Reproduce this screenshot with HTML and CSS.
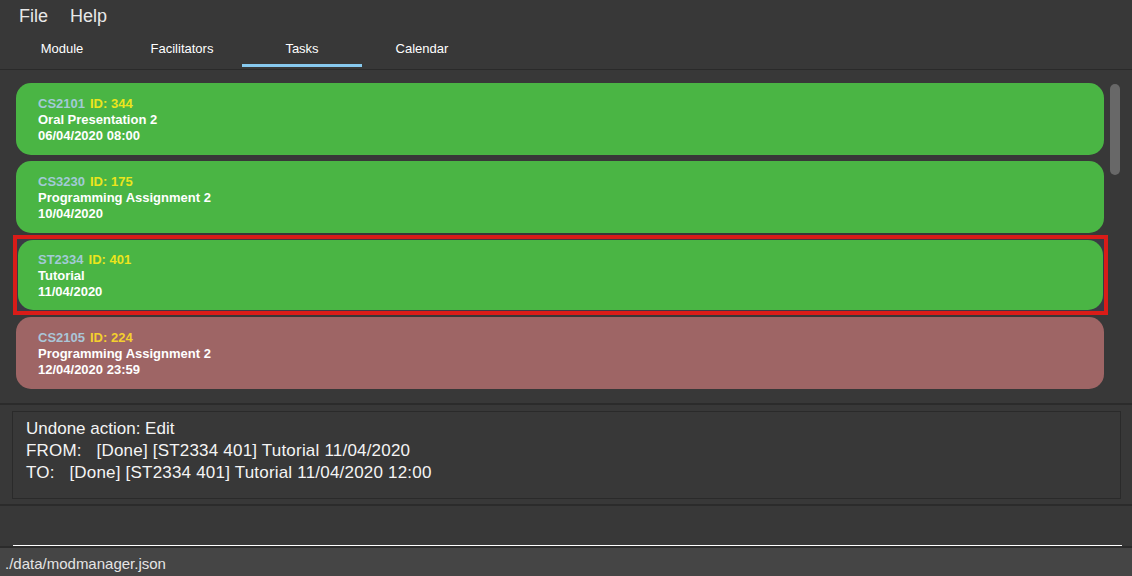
FILE: index.html
```html
<!DOCTYPE html>
<html>
<head>
<meta charset="utf-8">
<link rel="stylesheet" href="styles.css">
</head>
<body>
<div class="app">
  <div class="menubar">
    <span class="menu-item">File</span>
    <span class="menu-item">Help</span>
  </div>
  <div class="tabs">
    <div class="tab">Module</div>
    <div class="tab">Facilitators</div>
    <div class="tab active">Tasks</div>
    <div class="tab">Calendar</div>
  </div>
  <div class="list">
    <div class="cards">
      <div class="cell">
        <div class="card done">
          <div class="line"><span class="code">CS2101</span><span class="id">ID: 344</span></div>
          <div class="line">Oral Presentation 2</div>
          <div class="line">06/04/2020 08:00</div>
        </div>
      </div>
      <div class="cell">
        <div class="card done">
          <div class="line"><span class="code">CS3230</span><span class="id">ID: 175</span></div>
          <div class="line">Programming Assignment 2</div>
          <div class="line">10/04/2020</div>
        </div>
      </div>
      <div class="cell selected">
        <div class="card done">
          <div class="line"><span class="code">ST2334</span><span class="id">ID: 401</span></div>
          <div class="line">Tutorial</div>
          <div class="line">11/04/2020</div>
        </div>
      </div>
      <div class="cell">
        <div class="card overdue">
          <div class="line"><span class="code">CS2105</span><span class="id">ID: 224</span></div>
          <div class="line">Programming Assignment 2</div>
          <div class="line">12/04/2020 23:59</div>
        </div>
      </div>
    </div>
    <div class="scrolltrack"><div class="thumb"></div></div>
  </div>
  <div class="sep"></div>
  <div class="result">
    <div class="result-box">
      <div class="rline">Undone action: Edit</div>
      <div class="rline wide">FROM:   [Done] [ST2334 401] Tutorial 11/04/2020</div>
      <div class="rline wide">TO:   [Done] [ST2334 401] Tutorial 11/04/2020 12:00</div>
    </div>
  </div>
  <div class="sep"></div>
  <div class="command">
    <div class="command-input"></div>
  </div>
  <div class="sep"></div>
  <div class="status">./data/modmanager.json</div>
</div>
</body>
</html>
```
FILE: styles.css
```css
html, body {
  margin: 0;
  padding: 0;
}
body {
  background: #383838;
  font-family: "Liberation Sans", Arial, sans-serif;
  color: #ffffff;
}
.app {
  width: 1132px;
  height: 576px;
  display: flex;
  flex-direction: column;
  overflow: hidden;
}
.menubar {
  height: 30px;
  display: flex;
  align-items: center;
  padding-left: 8px;
  box-sizing: border-box;
  padding-top: 2px;
}
.menu-item {
  font-size: 18px;
  color: #e8e8e8;
  padding: 0 11px;
}
.tabs {
  height: 40px;
  box-sizing: border-box;
  border-bottom: 1px solid #2a2a2a;
  display: flex;
  padding-left: 2px;
}
.tab {
  width: 120px;
  height: 37px;
  box-sizing: border-box;
  display: flex;
  align-items: center;
  justify-content: center;
  font-size: 13px;
  color: #ffffff;
  padding-bottom: 1px;
}
.tab.active {
  border-bottom: 3px solid #87c9ee;
  padding-top: 3px;
}
.list {
  height: 333px;
  display: flex;
  padding: 13px 12px 0 16px;
  box-sizing: border-box;
  overflow: hidden;
}
.cards {
  width: 1088px;
  display: flex;
  flex-direction: column;
  gap: 6px;
}
.cell {
  height: 72px;
  flex: none;
}
.cell.selected {
  margin: -4px -4px -4px -3px;
  height: 80px;
  border: 4px solid #d91c18;
  padding: 1px;
  box-sizing: border-box;
  background: #3a3a44;
}
.card {
  height: 100%;
  box-sizing: border-box;
  border-radius: 15px;
  padding: 13px 22px 0 22px;
  font-size: 13px;
  font-weight: bold;
  line-height: 16px;
  color: #ffffff;
}
.cell.selected .card {
  padding-top: 12px;
  padding-left: 20px;
}
.card.done {
  background: #4ab544;
}
.card.overdue {
  background: #9e6565;
}
.code {
  color: #a2cad6;
  margin-right: 5px;
}
.id {
  color: #ece51c;
}
.overdue .code {
  color: #aac6d8;
}
.overdue .id {
  color: #f4d02e;
}
.scrolltrack {
  width: 10px;
  margin-left: 6px;
  padding-top: 1px;
}
.thumb {
  width: 10px;
  height: 91px;
  border-radius: 5px;
  background: #686868;
}
.sep {
  height: 2px;
  background: #2b2b2b;
  flex: none;
}
.result {
  height: 99px;
  box-sizing: border-box;
  padding: 6px 11px 5px 12px;
}
.result-box {
  height: 100%;
  box-sizing: border-box;
  border: 1px solid #2a2a2a;
  padding: 6px 13px;
  font-size: 17px;
  line-height: 22px;
  color: #f4f4f4;
}
.rline {
  white-space: pre;
}
.rline.wide {
  letter-spacing: 0.2px;
}
.command {
  height: 40px;
  box-sizing: border-box;
  padding: 0 10px 0 13px;
  display: flex;
  flex-direction: column;
  justify-content: flex-end;
}
.command-input {
  height: 39px;
  border-bottom: 1px solid #ffffff;
}
.status {
  height: 28px;
  background: #454545;
  font-size: 15px;
  color: #e4e4e4;
  padding-left: 5px;
  display: flex;
  align-items: center;
  padding-top: 2px;
  box-sizing: border-box;
}
```
